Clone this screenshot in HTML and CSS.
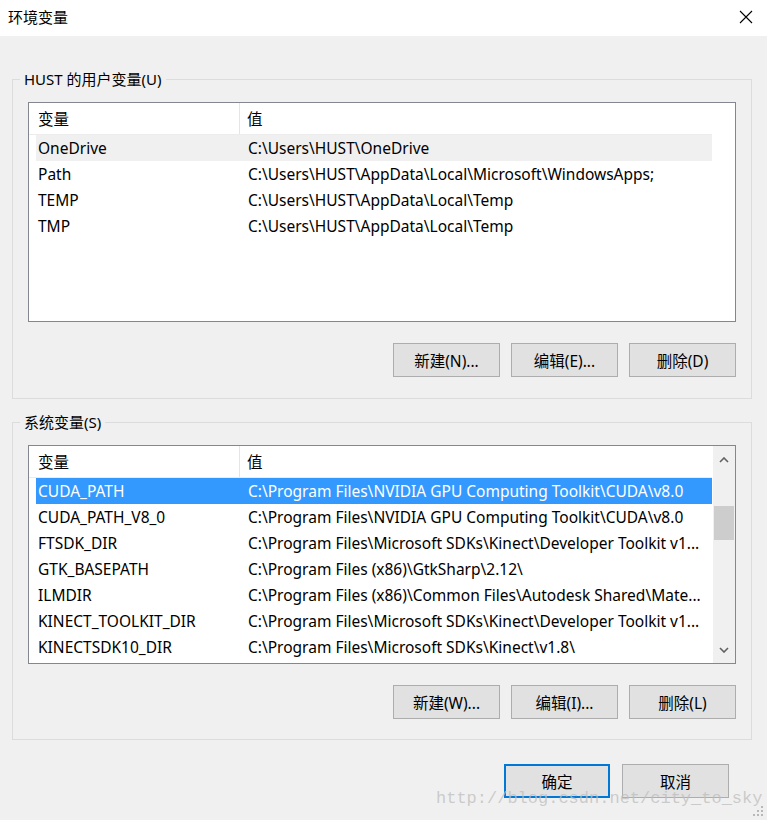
FILE: index.html
```html
<!DOCTYPE html>
<html lang="zh-CN">
<head>
    <meta charset="UTF-8">
    <meta name="viewport" content="width=device-width, initial-scale=1.0">
    <title>环境变量</title>
    <link rel="stylesheet" href="styles.css">
</head>
<body>
    <div class="window">
        <div class="titlebar">
            <span class="title">环境变量</span>
            <span class="close">
                <svg width="14" height="14" viewBox="0 0 14 14"><path d="M1 1L13 13M13 1L1 13" stroke="#000" stroke-width="1.1" fill="none"/></svg>
            </span>
        </div>

        <div class="content">
            <fieldset class="group">
                <legend>HUST 的用户变量(U)</legend>
                <div class="list">
                    <div class="list-view">
                        <div class="list-head">
                            <div class="col-name">变量</div>
                            <div class="col-value">值</div>
                        </div>
                        <div class="row inactive"><div class="col-name">OneDrive</div><div class="col-value">C:\Users\HUST\OneDrive</div></div>
                        <div class="row"><div class="col-name">Path</div><div class="col-value">C:\Users\HUST\AppData\Local\Microsoft\WindowsApps;</div></div>
                        <div class="row"><div class="col-name">TEMP</div><div class="col-value">C:\Users\HUST\AppData\Local\Temp</div></div>
                        <div class="row"><div class="col-name">TMP</div><div class="col-value">C:\Users\HUST\AppData\Local\Temp</div></div>
                    </div>
                </div>
                <div class="actions">
                    <button class="btn">新建(N)...</button>
                    <button class="btn">编辑(E)...</button>
                    <button class="btn">删除(D)</button>
                </div>
            </fieldset>

            <fieldset class="group system">
                <legend>系统变量(S)</legend>
                <div class="list">
                    <div class="list-view">
                        <div class="list-head">
                            <div class="col-name">变量</div>
                            <div class="col-value">值</div>
                        </div>
                        <div class="row selected"><div class="col-name">CUDA_PATH</div><div class="col-value">C:\Program Files\NVIDIA GPU Computing Toolkit\CUDA\v8.0</div></div>
                        <div class="row"><div class="col-name">CUDA_PATH_V8_0</div><div class="col-value">C:\Program Files\NVIDIA GPU Computing Toolkit\CUDA\v8.0</div></div>
                        <div class="row"><div class="col-name">FTSDK_DIR</div><div class="col-value">C:\Program Files\Microsoft SDKs\Kinect\Developer Toolkit v1...</div></div>
                        <div class="row"><div class="col-name">GTK_BASEPATH</div><div class="col-value">C:\Program Files (x86)\GtkSharp\2.12\</div></div>
                        <div class="row"><div class="col-name">ILMDIR</div><div class="col-value">C:\Program Files (x86)\Common Files\Autodesk Shared\Mate...</div></div>
                        <div class="row"><div class="col-name">KINECT_TOOLKIT_DIR</div><div class="col-value">C:\Program Files\Microsoft SDKs\Kinect\Developer Toolkit v1...</div></div>
                        <div class="row"><div class="col-name">KINECTSDK10_DIR</div><div class="col-value">C:\Program Files\Microsoft SDKs\Kinect\v1.8\</div></div>
                    </div>
                    <div class="scrollbar">
                        <div class="arrow">
                            <svg width="10" height="6" viewBox="0 0 10 6"><path d="M1 5L5 1L9 5" stroke="#606060" stroke-width="1.6" fill="none"/></svg>
                        </div>
                        <div class="track"><div class="thumb"></div></div>
                        <div class="arrow">
                            <svg width="10" height="6" viewBox="0 0 10 6"><path d="M1 1L5 5L9 1" stroke="#606060" stroke-width="1.6" fill="none"/></svg>
                        </div>
                    </div>
                </div>
                <div class="actions">
                    <button class="btn">新建(W)...</button>
                    <button class="btn">编辑(I)...</button>
                    <button class="btn">删除(L)</button>
                </div>
            </fieldset>
        </div>

        <div class="footer">
            <button class="btn default">确定</button>
            <button class="btn">取消</button>
        </div>

        <div class="watermark">http://blog.csdn.net/city_to_sky</div>
        <svg class="grip" width="12" height="12" viewBox="0 0 12 12">
            <rect x="9" y="1" width="2" height="2" fill="#b8b8b8"/>
            <rect x="5" y="5" width="2" height="2" fill="#b8b8b8"/>
            <rect x="9" y="5" width="2" height="2" fill="#b8b8b8"/>
            <rect x="1" y="9" width="2" height="2" fill="#b8b8b8"/>
            <rect x="5" y="9" width="2" height="2" fill="#b8b8b8"/>
            <rect x="9" y="9" width="2" height="2" fill="#b8b8b8"/>
        </svg>
    </div>
</body>
</html>
```

FILE: styles.css
```css
html, body {
    margin: 0;
    padding: 0;
}
body {
    font-family: "Noto Sans", "Noto Sans CJK SC", sans-serif;
    font-size: 15.5px;
    color: #000;
    background-color: #f0f0f0;
}
.window {
    position: relative;
    width: 767px;
    height: 820px;
    background-color: #f0f0f0;
    overflow: hidden;
}
.titlebar {
    display: flex;
    align-items: center;
    justify-content: space-between;
    height: 36px;
    padding: 0 14px 0 8px;
    background-color: #fff;
    box-sizing: border-box;
}
.title {
    font-size: 15px;
    margin-top: -4px;
}
.close {
    display: flex;
    margin-top: -2px;
}
.content {
    padding: 33px 15px 0 12px;
}
.group {
    margin: 0;
    padding: 13px 15px 21px 15px;
    border: 1px solid #dcdcdc;
}
.group legend {
    margin-left: -8px;
    padding: 0 4px;
    font-size: 15px;
    line-height: 20px;
}
.group.system {
    margin-top: 13px;
    padding-bottom: 20px;
}
.list {
    display: flex;
    height: 220px;
    box-sizing: border-box;
    border: 1px solid #828790;
    background-color: #fff;
    overflow: hidden;
}
.system .list {
    height: 219px;
}
.list-view {
    width: 683px;
    flex: none;
}
.list-head {
    display: flex;
    height: 31px;
    border-bottom: 1px solid #ececec;
    align-items: center;
}
.list-head .col-name {
    width: 211px;
    height: 100%;
    padding-left: 9px;
    box-sizing: border-box;
    border-right: 1px solid #e5e5e5;
    display: flex;
    align-items: center;
}
.list-head .col-value {
    padding-left: 7px;
}
.row {
    display: flex;
    align-items: center;
    height: 26px;
    margin-left: 7px;
    white-space: nowrap;
}
.row .col-name {
    width: 204px;
    padding-left: 2px;
    box-sizing: border-box;
    flex: none;
}
.row .col-value {
    padding-left: 8px;
}
.row.inactive {
    background-color: #f0f0f0;
}
.row.selected {
    background-color: #3399ff;
    color: #fff;
}
.scrollbar {
    display: flex;
    flex-direction: column;
    width: 22px;
    margin-left: 1px;
    background-color: #f0f0f0;
}
.arrow {
    height: 27px;
    display: flex;
    align-items: center;
    justify-content: center;
}
.track {
    flex: 1;
    padding-top: 33px;
}
.thumb {
    margin: 0 1px;
    height: 34px;
    background-color: #cdcdcd;
}
.actions {
    display: flex;
    justify-content: flex-end;
    gap: 11px;
    margin-top: 21px;
}
.btn {
    width: 107px;
    height: 34px;
    padding: 0;
    font-family: inherit;
    font-size: 15.5px;
    color: #000;
    background-color: #e1e1e1;
    border: 1px solid #adadad;
}
.btn.default {
    width: 106px;
    border: 2px solid #0078d7;
}
.footer {
    display: flex;
    justify-content: flex-end;
    gap: 12px;
    margin-top: 24px;
    padding-right: 38px;
}
.watermark {
    position: absolute;
    left: 436px;
    top: 789px;
    font-family: "Liberation Mono", monospace;
    font-size: 17px;
    color: rgba(190, 190, 190, 0.75);
    white-space: nowrap;
}
.grip {
    position: absolute;
    right: 3px;
    bottom: 3px;
}
```
